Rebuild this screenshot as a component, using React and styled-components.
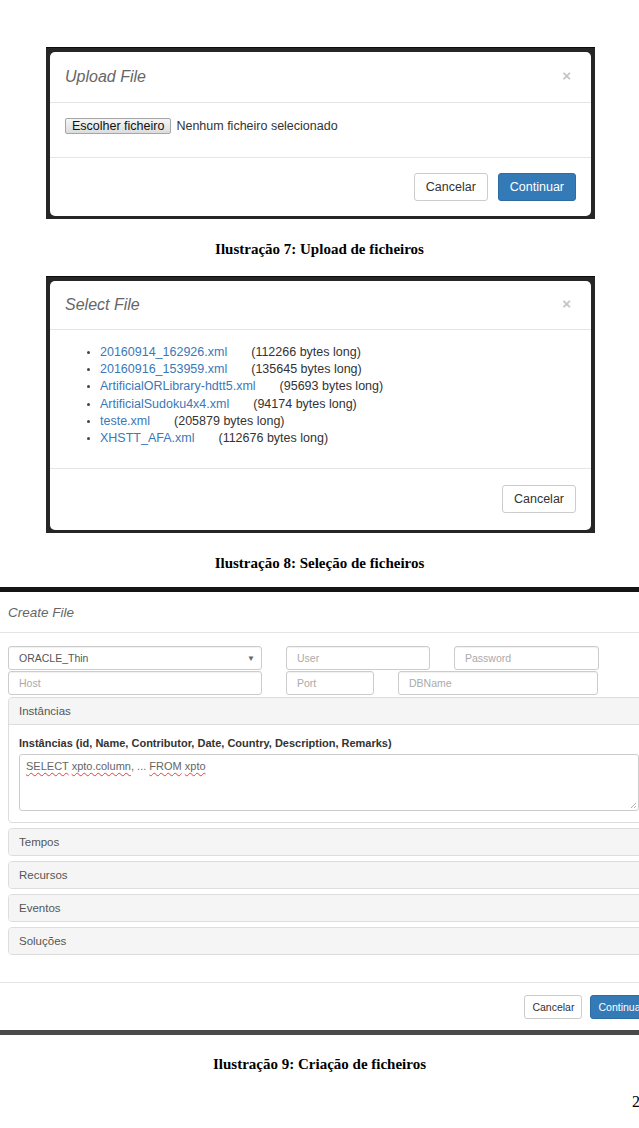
import React from 'react';
import styled, { createGlobalStyle } from 'styled-components';

const GlobalStyle = createGlobalStyle`
  html, body {
    margin: 0;
    padding: 0;
    background: #fff;
  }
  body {
    font-family: "Liberation Sans", Arial, sans-serif;
    color: #333;
  }
`;

let Page = styled.div`
  width: 639px;
  overflow: hidden;
  padding-top: 47px;
`;

let Frame = styled.div`
  margin: 0 44px 0 46px;
  padding: 4px 4px 3px 4px;
  background: #262626;
  border-top: 1px solid #0c0c0c;
`;

let WideFrame = styled.div`
  width: 639px;
  overflow: hidden;
  border-top: 5px solid #151515;
  border-bottom: 5px solid #4a4a4a;
`;

let Modal = styled.div`
  background: #fff;
  border-radius: 5px;
  display: flex;
  flex-direction: column;
  width: ${(p) => p.$width || 'auto'};
`;

let Header = styled.div`
  height: ${(p) => p.$h}px;
  box-sizing: border-box;
  display: flex;
  align-items: center;
  justify-content: space-between;
  padding: 0 20px 0 ${(p) => p.$pl || 15}px;
  border-bottom: 1px solid #e5e5e5;
`;

let Title = styled.h4`
  margin: 0;
  font-weight: normal;
  font-style: italic;
  font-size: ${(p) => p.$size || 16}px;
  color: #666;
`;

let Close = styled.span`
  font-size: 15px;
  font-weight: bold;
  color: #c4c4c4;
  margin-top: -4px;
`;

let Body = styled.div`
  height: ${(p) => p.$h}px;
  box-sizing: border-box;
  padding: ${(p) => p.$pt}px 15px 0 15px;
  border-bottom: 1px solid #e5e5e5;
`;

let Footer = styled.div`
  height: ${(p) => p.$h}px;
  box-sizing: border-box;
  display: flex;
  justify-content: flex-end;
  align-items: flex-start;
  gap: ${(p) => p.$gap || 10}px;
  padding: ${(p) => p.$pt}px ${(p) => p.$pr || 15}px 0 0;
`;

let Button = styled.button`
  height: ${(p) => (p.$small ? 24 : 28)}px;
  padding: 0 ${(p) => (p.$small ? 7 : 11)}px;
  font-family: "Liberation Sans", Arial, sans-serif;
  font-size: ${(p) => (p.$small ? 10.5 : 12.5)}px;
  border-radius: 3px;
  border: 1px solid ${(p) => (p.$primary ? '#2e6da4' : '#ccc')};
  background: ${(p) => (p.$primary ? '#337ab7' : '#fff')};
  color: ${(p) => (p.$primary ? '#fff' : '#333')};
`;

let FileRow = styled.div`
  display: flex;
  align-items: center;
  gap: 5px;
  font-size: 12.5px;
  color: #333;
`;

let FileButton = styled.span`
  height: 16px;
  box-sizing: border-box;
  line-height: 14px;
  padding: 0 6px;
  border: 1px solid #a6a6a6;
  border-radius: 2px;
  background: linear-gradient(#f6f6f6, #dcdcdc);
  color: #111;
`;

let FileList = styled.ul`
  margin: 0;
  padding: 0 0 0 35px;
  font-size: 12.5px;
  line-height: 17.2px;
  color: #333;
  li::marker {
    font-size: 10px;
    color: #444;
  }
`;

let FileLink = styled.a`
  color: #3b78b8;
  text-decoration: none;
`;

let FileSize = styled.span`
  margin-left: 24px;
`;

let Caption = styled.div`
  font-family: "Liberation Serif", "Times New Roman", serif;
  font-weight: bold;
  font-size: 15px;
  line-height: 20px;
  text-align: center;
  color: #000;
  margin: ${(p) => p.$mt}px 0 ${(p) => p.$mb}px;
`;

let PageNumber = styled.div`
  font-family: "Liberation Serif", "Times New Roman", serif;
  font-size: 16px;
  line-height: 20px;
  text-align: right;
  margin: 18px -1px 0 0;
  color: #000;
`;

let FormBody = styled.div`
  height: 350px;
  box-sizing: border-box;
  padding: 13px 8px 0 8px;
  border-bottom: 1px solid #e5e5e5;
  display: flex;
  flex-direction: column;
`;

let FieldRow = styled.div`
  display: grid;
  grid-template-columns: ${(p) => p.$cols};
  column-gap: 24px;
  margin-bottom: ${(p) => p.$mb || 0}px;
`;

let Field = styled.div`
  height: 24px;
  box-sizing: border-box;
  border: 1px solid #ccc;
  border-radius: 3px;
  box-shadow: inset 0 1px 1px rgba(0, 0, 0, 0.06);
  padding: 0 6px 0 10px;
  display: flex;
  align-items: center;
  justify-content: space-between;
  font-size: 10.5px;
  color: ${(p) => (p.$placeholder ? '#aaa' : '#555')};
`;

let Caret = styled.span`
  font-size: 8px;
  color: #666;
`;

let Panel = styled.div`
  border: 1px solid #ddd;
  border-radius: 4px;
  margin-top: ${(p) => p.$mt || 0}px;
  overflow: hidden;
`;

let PanelHeading = styled.div`
  height: ${(p) => (p.$open ? 27 : 26)}px;
  box-sizing: border-box;
  background: #f5f5f5;
  display: flex;
  align-items: center;
  padding-left: 10px;
  font-size: 11.5px;
  color: #555;
  border-bottom: ${(p) => (p.$open ? '1px solid #ddd' : 'none')};
`;

let PanelBody = styled.div`
  height: 97px;
  box-sizing: border-box;
  padding: 11px 10px 0 10px;
`;

let Label = styled.div`
  font-size: 11px;
  font-weight: bold;
  line-height: 14px;
  color: #333;
`;

let SqlBox = styled.div`
  position: relative;
  margin-top: 4px;
  width: 620px;
  height: 57px;
  box-sizing: border-box;
  border: 1px solid #ccc;
  border-radius: 3px;
  padding: 5px 6px;
  font-size: 11px;
  color: #666;
`;

let Misspelled = styled.span`
  text-decoration: underline wavy #e04040;
  text-decoration-thickness: 1px;
  text-underline-offset: 2px;
`;

let Grip = styled.svg`
  position: absolute;
  right: 1px;
  bottom: 1px;
`;

const files = [
  ['20160914_162926.xml', '112266'],
  ['20160916_153959.xml', '135645'],
  ['ArtificialORLibrary-hdtt5.xml', '95693'],
  ['ArtificialSudoku4x4.xml', '94174'],
  ['teste.xml', '205879'],
  ['XHSTT_AFA.xml', '112676'],
];

const sections = ['Tempos', 'Recursos', 'Eventos', 'Soluções'];

export default function App() {
  return (
    <Page>
      <GlobalStyle />

      <Frame>
        <Modal>
          <Header $h={51}>
            <Title>Upload File</Title>
            <Close>×</Close>
          </Header>
          <Body $h={55} $pt={15}>
            <FileRow>
              <FileButton>Escolher ficheiro</FileButton>
              <span>Nenhum ficheiro selecionado</span>
            </FileRow>
          </Body>
          <Footer $h={58} $pt={15}>
            <Button>Cancelar</Button>
            <Button $primary>Continuar</Button>
          </Footer>
        </Modal>
      </Frame>
      <Caption $mt={20} $mb={17}>Ilustração 7: Upload de ficheiros</Caption>

      <Frame>
        <Modal>
          <Header $h={49}>
            <Title>Select File</Title>
            <Close>×</Close>
          </Header>
          <Body $h={139} $pt={14}>
            <FileList>
              {files.map(([name, size]) => (
                <li key={name}>
                  <FileLink href="#">{name}</FileLink>
                  <FileSize>({size} bytes long)</FileSize>
                </li>
              ))}
            </FileList>
          </Body>
          <Footer $h={61} $pt={16}>
            <Button>Cancelar</Button>
          </Footer>
        </Modal>
      </Frame>
      <Caption $mt={20} $mb={14}>Ilustração 8: Seleção de ficheiros</Caption>

      <WideFrame>
        <Modal $width="680px">
          <Header $h={41} $pl={8}>
            <Title $size={13.5}>Create File</Title>
          </Header>
          <FormBody>
            <FieldRow $cols="254px 144px 145px" $mb={1}>
              <Field>
                ORACLE_Thin
                <Caret>▼</Caret>
              </Field>
              <Field $placeholder>User</Field>
              <Field $placeholder>Password</Field>
            </FieldRow>
            <FieldRow $cols="254px 88px 200px">
              <Field $placeholder>Host</Field>
              <Field $placeholder>Port</Field>
              <Field $placeholder>DBName</Field>
            </FieldRow>
            <Panel $mt={2}>
              <PanelHeading $open>Instâncias</PanelHeading>
              <PanelBody>
                <Label>Instâncias (id, Name, Contributor, Date, Country, Description, Remarks)</Label>
                <SqlBox>
                  <Misspelled>SELECT</Misspelled> <Misspelled>xpto.column</Misspelled>, ...{' '}
                  <Misspelled>FROM</Misspelled> <Misspelled>xpto</Misspelled>
                  <Grip width="7" height="7" viewBox="0 0 7 7">
                    <path d="M6 1L1 6M6 4L4 6" stroke="#999" strokeWidth="0.8" />
                  </Grip>
                </SqlBox>
              </PanelBody>
            </Panel>
            {sections.map((s) => (
              <Panel key={s} $mt={5}>
                <PanelHeading>{s}</PanelHeading>
              </Panel>
            ))}
          </FormBody>
          <Footer $h={47} $pt={12} $pr={28} $gap={8}>
            <Button $small>Cancelar</Button>
            <Button $small $primary>Continuar</Button>
          </Footer>
        </Modal>
      </WideFrame>
      <Caption $mt={19} $mb={0}>Ilustração 9: Criação de ficheiros</Caption>
      <PageNumber>2</PageNumber>
    </Page>
  );
}
